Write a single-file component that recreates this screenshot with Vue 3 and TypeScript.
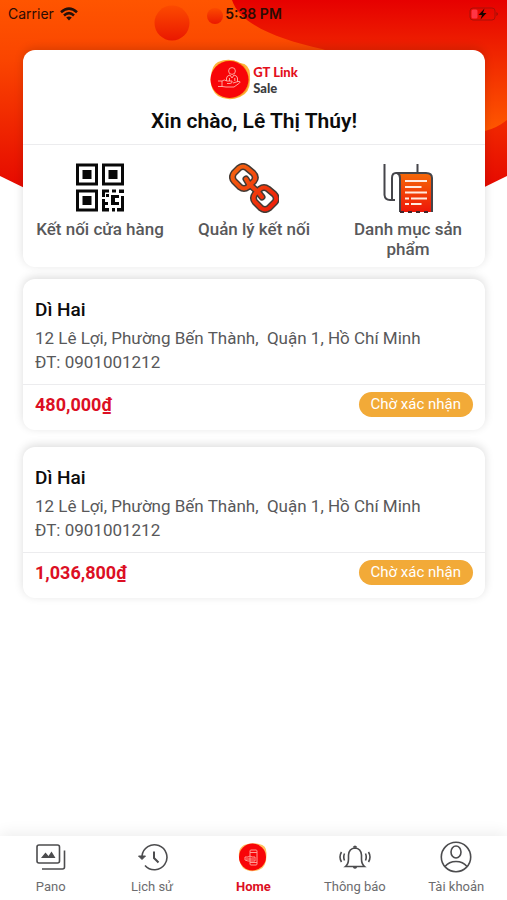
<script setup lang="ts">
interface Order {
  id: number
  name: string
  address: string
  phone: string
  total: string
  status: string
}

interface Tab {
  key: string
  label: string
}

const orders: Order[] = [
  {
    id: 1,
    name: 'Dì Hai',
    address: '12 Lê Lợi, Phường Bến Thành,\u00a0 Quận 1, Hồ Chí Minh',
    phone: '0901001212',
    total: '480,000₫',
    status: 'Chờ xác nhận',
  },
  {
    id: 2,
    name: 'Dì Hai',
    address: '12 Lê Lợi, Phường Bến Thành,\u00a0 Quận 1, Hồ Chí Minh',
    phone: '0901001212',
    total: '1,036,800₫',
    status: 'Chờ xác nhận',
  },
]

const tabs: Tab[] = [
  { key: 'pano', label: 'Pano' },
  { key: 'history', label: 'Lịch sử' },
  { key: 'home', label: 'Home' },
  { key: 'alerts', label: 'Thông báo' },
  { key: 'account', label: 'Tài khoản' },
]

const activeTab = 'home'
</script>

<template>
  <div class="screen">
    <svg class="backdrop" viewBox="0 0 507 300" preserveAspectRatio="none" aria-hidden="true">
      <defs>
        <linearGradient id="bgMain" x1="0" y1="0" x2="0" y2="1">
          <stop offset="0" stop-color="#ff5500" />
          <stop offset="0.2" stop-color="#fa4500" />
          <stop offset="0.62" stop-color="#e60a00" />
          <stop offset="1" stop-color="#e00000" />
        </linearGradient>
        <linearGradient id="bgBlob" x1="0" y1="0" x2="0" y2="1">
          <stop offset="0" stop-color="#e60000" />
          <stop offset="0.35" stop-color="#ee2000" />
          <stop offset="1" stop-color="#ff5800" />
        </linearGradient>
        <linearGradient id="bgBall" x1="0" y1="0" x2="0" y2="1">
          <stop offset="0" stop-color="#fc4a00" />
          <stop offset="1" stop-color="#ea1800" />
        </linearGradient>
      </defs>
      <path d="M0 0H507V176L254 300L0 176Z" fill="url(#bgMain)" />
      <path d="M232 0H507V120Q497 128 485 131C420 120 370 62 322 49C280 40 240 25 232 0Z" fill="url(#bgBlob)" />
      <circle cx="172" cy="23" r="17.500" fill="url(#bgBall)" />
      <circle cx="215" cy="16" r="8" fill="url(#bgBall)" />
    </svg>

    <header class="status">
      <span class="carrier">
        Carrier
        <svg width="18" height="14" viewBox="0 0 18 14" aria-hidden="true">
          <g fill="none" stroke="#24100a" stroke-width="2.600">
            <path d="M1 5.200Q9-2 17 5.200" />
            <path d="M4 8.400Q9 4 14 8.400" />
          </g>
          <path d="M6.200 10.600Q9 8.400 11.800 10.600L9 13.600Z" fill="#24100a" />
        </svg>
      </span>
      <time class="clock">5:38 PM</time>
      <svg class="battery" width="30" height="14" viewBox="0 0 30 14" aria-hidden="true">
        <rect x="1" y="1" width="25" height="12" rx="3" fill="none" stroke="#a81008" />
        <rect x="2.500" y="2.500" width="6" height="9" rx="1.500" fill="#ff3545" />
        <path d="M27.500 5Q30 7 27.500 9Z" fill="#8d1008" />
        <path d="M15.500 1.500L9.500 8H13L11.500 12.500L17.500 6H14Z" fill="#180400" />
      </svg>
    </header>

    <main class="content">
      <section class="card hero">
        <div class="welcome">
          <div class="brand">
            <svg width="41" height="41" viewBox="0 0 41 41" aria-hidden="true">
              <path d="M8 3Q20-2 30 4Q41 5 40 18Q41 34 30 38Q18 43 8 37Q-1 30 1 17Q2 6 8 3Z" fill="#ffb43c" />
              <path d="M10 4Q24-2 34 7Q43 20 36 32Q28 42 14 38Q1 34 1 20Q2 9 10 4Z" fill="#f0800f" opacity="0.6" />
              <ellipse cx="19.500" cy="20.500" rx="19" ry="18.500" fill="#f80508" />
              <g fill="none" stroke="#ffb8ae" stroke-width="0.900" stroke-linejoin="round">
                <circle cx="22" cy="12" r="3.400" />
                <path d="M16.500 22V19Q17 16.500 20 16L22 19L24 16Q27 16.500 27.500 19V23M19.500 22V19M24.800 22V19" />
                <path d="M8 22H12Q14 20 17 22H22Q23 24 20 24.500H17M23 24L28 22.500Q31 22 29.500 24L24 28H16L12 27.500H8M12 22V28" />
              </g>
            </svg>
            <span class="brand-name"><b>GT Link</b><b class="brand-sub">Sale</b></span>
          </div>
          <h1>Xin chào, Lê Thị Thúy!</h1>
        </div>

        <div class="actions">
          <button type="button" class="action">
            <svg width="50" height="50" viewBox="0 0 50 50" aria-hidden="true">
              <g fill="none" stroke="#080808" stroke-width="3">
                <rect x="2.500" y="2" width="19" height="19" />
                <rect x="28.500" y="2" width="19" height="19" />
                <rect x="2.500" y="28" width="19" height="19" />
              </g>
              <g fill="#080808">
                <rect x="7.500" y="7" width="9" height="9" />
                <rect x="33.500" y="7" width="9" height="9" />
                <rect x="7.500" y="33" width="9" height="9" />
                <path d="M27 26.500H34V29.500H30V34H27ZM37 26.500H41V29.500H37ZM44 26.500H49V30H44ZM27 36H30V39H33V42H30V45H34V48.500H27ZM31 31H34V34H31ZM36 32H44V35H40V39H44V42H36ZM46 33H49V48.500H42V45H46ZM37 45H40V48.500H37Z" />
              </g>
            </svg>
            <span>Kết nối cửa hàng</span>
          </button>

          <button type="button" class="action">
            <svg width="50" height="50" viewBox="0 0 50 50" aria-hidden="true">
              <defs>
                <linearGradient id="chain" gradientUnits="userSpaceOnUse" x1="0" y1="0" x2="50" y2="50">
                  <stop offset="0" stop-color="#f56a10" />
                  <stop offset="1" stop-color="#ee1608" />
                </linearGradient>
                <path
                  id="links"
                  d="M5 10L10 5Q14 2 18 5L24 10Q28 14 25 18L19 24Q15 27 11 24L5 18Q2 14 5 10ZM26 31L31 26Q35 23 39 26L45 31Q49 35 46 39L40 45Q36 48 32 45L26 39Q23 35 26 31Z"
                />
                <path id="joints" d="M17 16L20 21L29 29L33 34" />
              </defs>
              <g fill="none" stroke-linejoin="round" stroke-linecap="round">
                <g stroke="#443a34" stroke-width="7">
                  <use href="#links" />
                  <use href="#joints" />
                </g>
                <g stroke="url(#chain)" stroke-width="4">
                  <use href="#links" />
                  <use href="#joints" />
                </g>
              </g>
            </svg>
            <span>Quản lý kết nối</span>
          </button>

          <button type="button" class="action">
            <svg width="50" height="50" viewBox="0 0 50 50" aria-hidden="true">
              <defs>
                <linearGradient id="sheet" x1="0" y1="0" x2="0" y2="1">
                  <stop offset="0" stop-color="#f56a08" />
                  <stop offset="1" stop-color="#ee1608" />
                </linearGradient>
              </defs>
              <path d="M17 49V14Q17 10 14 10H43Q49 10 49 15V49Z" fill="url(#sheet)" />
              <g fill="none" stroke="#45454a" stroke-width="2">
                <path d="M1.500 1V32Q2 37 7 37H12M9 36V15Q9 10 13 10H43Q49 10 49 15V49M17 49V15Q17 11 14 10M34.500 1V10" />
              </g>
              <path d="M17 49H49" stroke="#45252a" stroke-width="2" stroke-dasharray="4 4" />
              <path d="M22 18H44M22 24H38.500M22 29.500H44M22 35.500H26M28 35.500H44M22 41H26M28 41H38.500" stroke="#ffe9df" stroke-width="2.200" />
            </svg>
            <span>Danh mục sản phẩm</span>
          </button>
        </div>
      </section>

      <ul class="orders">
        <li v-for="order in orders" :key="order.id" class="card order">
          <div class="order-info">
            <h2>{{ order.name }}</h2>
            <p>{{ order.address }}</p>
            <p>ĐT: {{ order.phone }}</p>
          </div>
          <div class="order-foot">
            <strong>{{ order.total }}</strong>
            <span class="chip">{{ order.status }}</span>
          </div>
        </li>
      </ul>
    </main>

    <nav class="tabs">
      <a
        v-for="tab in tabs"
        :key="tab.key"
        href="#"
        class="tab"
        :class="{ active: tab.key === activeTab }"
        :aria-current="tab.key === activeTab ? 'page' : undefined"
      >
        <svg width="32" height="32" viewBox="0 0 32 32" fill="none" stroke="#4c4c4e" stroke-width="1.600" aria-hidden="true">
          <g v-if="tab.key === 'pano'">
            <rect x="2" y="4" width="22.500" height="18" rx="2" />
            <path d="M29.500 9.500V26Q29.500 28 27.500 28H7" />
            <path d="M6 17L10.500 11.500L13.500 15L16.500 10.500L20.500 17Z" fill="#4c4c4e" stroke="none" />
          </g>
          <g v-else-if="tab.key === 'history'">
            <path d="M6 15A12.500 12.500 0 1 1 9 24.500" />
            <path d="M2.500 15H9.500L6 18.500Z" fill="#4c4c4e" stroke-width="1" />
            <path d="M18 10.500V17L22.500 21.500" stroke-width="2" />
          </g>
          <g v-else-if="tab.key === 'home'" stroke="none">
            <path d="M7 4Q15 1 22 3Q30 4 29.500 13Q30 26 22 29Q12 32 6 27Q1 20 2 12Q2 7 7 4Z" fill="#ffc060" />
            <circle cx="15.500" cy="16" r="13.500" fill="#f80508" />
            <g stroke="#ff9d94" stroke-width="1">
              <rect x="13" y="9" width="7" height="15" rx="1" />
              <path d="M8 16H11Q13 14 15 16H18V20H11L8 19ZM13 11.500H20M13 21.500H20M9 18H17" />
            </g>
          </g>
          <g v-else-if="tab.key === 'alerts'">
            <path d="M6.500 25.500Q9.500 23 9.500 18V14Q10 7.500 16 7Q22 7.500 22.500 14V18Q22.500 23 25.500 25.500Z" />
            <path d="M14.500 6.500Q16 4 17.500 6.500M14.500 26Q16 28 17.500 26" fill="#4c4c4e" />
            <path d="M5.500 12.500Q4 16 5.500 19.500M2.500 11Q-0.500 16 2.500 21M26.500 12.500Q28 16 26.500 19.500M29.500 11Q32.500 16 29.500 21" />
          </g>
          <g v-else>
            <circle cx="16" cy="16" r="14.700" />
            <ellipse cx="16" cy="11" rx="5" ry="6" />
            <path d="M5 25.500Q9 20.500 16 20.500Q23 20.500 27 25.500" />
          </g>
        </svg>
        <span>{{ tab.label }}</span>
      </a>
    </nav>
  </div>
</template>

<style>
body {
  margin: 0;
  background: #fff;
}
</style>

<style scoped>
.screen {
  position: relative;
  display: flex;
  flex-direction: column;
  min-height: 100vh;
  background: #fff;
  font-family: Roboto, "Noto Sans", sans-serif;
  color: #58585a;
}

.backdrop {
  position: absolute;
  top: 0;
  left: 0;
  width: 100%;
  height: 300px;
  clip-path: inset(0 0 60px 0);
}

.status {
  position: relative;
  display: grid;
  grid-template-columns: 1fr auto 1fr;
  align-items: center;
  height: 28px;
  padding: 0 8px;
  font-family: Inter, sans-serif;
  font-size: 14px;
  line-height: 18px;
  color: #2c0c04;
}

.carrier {
  display: flex;
  align-items: center;
  gap: 6px;
}

.clock {
  font-weight: 600;
}

.battery {
  justify-self: end;
}

.content {
  position: relative;
  flex: 1;
  padding: 22px 22px 24px 23px;
}

.card {
  background: #fff;
  border-radius: 12px;
  box-shadow: 0 -2px 10px rgba(0, 0, 0, 0.14);
}

.hero {
  margin-bottom: 12px;
}

.welcome {
  display: flex;
  flex-direction: column;
  align-items: center;
  gap: 9px;
  padding: 9px 12px 10px;
  border-bottom: 1px solid #ececee;
}

.brand {
  display: flex;
  align-items: center;
  gap: 2px;
}

.brand-name {
  display: flex;
  flex-direction: column;
  font-family: Lato, sans-serif;
  font-size: 13px;
  line-height: 16px;
  color: #e3101c;
}

.brand-name b {
  font-weight: 900;
}

.brand-name .brand-sub {
  color: #3c3c3e;
}

h1,
h2,
p {
  margin: 0;
}

h1 {
  font-size: 21px;
  line-height: 25px;
  font-weight: 600;
  color: #0c0c0c;
}

.actions {
  display: grid;
  grid-template-columns: repeat(3, 1fr);
  padding: 18px 0 8px;
}

.action {
  display: flex;
  flex-direction: column;
  align-items: center;
  gap: 6px;
  padding: 0 10px;
  border: 0;
  background: none;
  font: inherit;
  font-size: 17px;
  line-height: 20px;
  font-weight: 500;
  color: #58585a;
}

.orders {
  display: flex;
  flex-direction: column;
  gap: 17px;
  margin: 0;
  padding: 0;
  list-style: none;
}

.order-info {
  padding: 19px 12px 10px;
  font-size: 17px;
  line-height: 24px;
  border-bottom: 1px solid #ececee;
}

h2 {
  margin-bottom: 4px;
  font-size: 19px;
  line-height: 24px;
  font-weight: 500;
  color: #0c0c0c;
}

.order-foot {
  display: flex;
  align-items: center;
  justify-content: space-between;
  padding: 7px 12px 13px;
}

.order-foot strong {
  font-size: 18px;
  line-height: 24px;
  font-weight: 700;
  color: #dc0f24;
}

.chip {
  padding: 0 12px;
  border-radius: 13px;
  background: #f2aa38;
  font-size: 15px;
  line-height: 25px;
  color: #fff;
}

.tabs {
  position: relative;
  display: grid;
  grid-template-columns: repeat(5, 1fr);
  padding: 5px 0 4px;
  background: #fff;
  box-shadow: 0 -3px 14px rgba(0, 0, 0, 0.07);
}

.tab {
  display: flex;
  flex-direction: column;
  align-items: center;
  gap: 4px;
  font-size: 13px;
  line-height: 19px;
  color: #6c6c6e;
  text-decoration: none;
}

.tab.active {
  font-weight: 700;
  color: #dc0f24;
}
</style>
